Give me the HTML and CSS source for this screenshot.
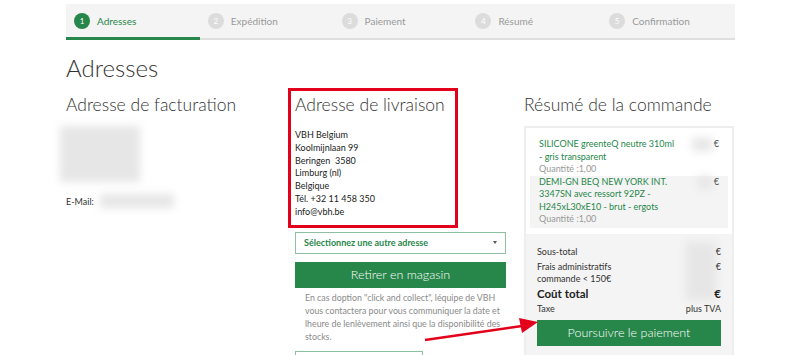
FILE: index.html
```html
<!DOCTYPE html>
<html lang="fr">
<head>
  <meta charset="UTF-8" />
  <meta name="viewport" content="width=device-width, initial-scale=1.0"/>
  <title>Adresses - VBH</title>
  <link rel="stylesheet" href="styles.css">
</head>
<body>

  <div class="page">
    <ul class="steps">
      <li class="step active"><span class="num">1</span>Adresses</li>
      <li class="step"><span class="num">2</span>Expédition</li>
      <li class="step"><span class="num">3</span>Paiement</li>
      <li class="step"><span class="num">4</span>Résumé</li>
      <li class="step"><span class="num">5</span>Confirmation</li>
    </ul>

    <h1>Adresses</h1>

    <div class="columns">
      <!-- billing -->
      <div class="col">
        <h3>Adresse de facturation</h3>
        <div class="blurred billing-blur"></div>
        <div class="email">E-Mail: <span class="blurred email-blur"></span></div>
      </div>

      <!-- delivery -->
      <div class="col delivery">
        <div class="marked">
          <h3>Adresse de livraison</h3>
          <div class="address">
            VBH Belgium<br>
            Koolmijnlaan 99<br>
            Beringen&nbsp; 3580<br>
            Limburg (nl)<br>
            Belgique<br>
            Tél. +32 11 458 350<br>
            info@vbh.be
          </div>
        </div>

        <div class="select">
          <span>Sélectionnez une autre adresse</span>
          <span class="caret"></span>
        </div>
        <button class="btn">Retirer en magasin</button>
        <p class="note">En cas doption "click and collect", léquipe de VBH vous contactera pour vous communiquer la date et lheure de lenlèvement ainsi que la disponibilité des stocks.</p>
        <div class="outline-btn"></div>
      </div>

      <!-- summary -->
      <div class="col">
        <h3>Résumé de la commande</h3>
        <div class="summary">
          <div class="items">
            <div class="item">
              <div class="item-info">
                <div class="item-name">SILICONE greenteQ neutre 310ml - gris transparent</div>
                <div class="qty">Quantité :1,00</div>
              </div>
              <div class="price"><span class="blurred price-blur"></span>€</div>
            </div>
            <div class="item alt">
              <div class="item-info">
                <div class="item-name">DEMI-GN BEQ NEW YORK INT. 3347SN avec ressort 92PZ - H245xL30xE10 - brut - ergots</div>
                <div class="qty">Quantité :1,00</div>
              </div>
              <div class="price"><span class="blurred price-blur small"></span>€</div>
            </div>
          </div>
          <div class="totals">
            <span class="blurred totals-blur"></span>
            <div class="line"><span>Sous-total</span><span>€</span></div>
            <div class="line"><span>Frais administratifs<br>commande &lt; 150€</span><span>€</span></div>
            <div class="line total"><span>Coût total</span><span>€</span></div>
            <div class="line"><span>Taxe</span><span>plus TVA</span></div>
            <button class="btn pay">Poursuivre le paiement</button>
          </div>
        </div>
      </div>
    </div>

    <svg class="arrow" width="800" height="355" viewBox="0 0 800 355">
      <line x1="425" y1="340" x2="522" y2="326" stroke="#e3001b" stroke-width="2.5"/>
      <polygon points="538,322 519,318 522,333" fill="#e3001b"/>
    </svg>
  </div>

</body>
</html>
```

FILE: styles.css
```css
:root {
  --green: #27874a;
  --green-line: #8cc0a0;
  --text: #333;
  --muted: #8a8a8a;
  --light: #f4f4f4;
}
body {
  font-family: Lato, 'Open Sans', sans-serif;
  margin: 0;
  padding: 0;
  color: var(--text);
  background: #fff;
}
.page {
  position: relative;
  width: 669px;
  margin-left: 66px;
  padding-top: 4px;
}
.steps {
  display: flex;
  list-style: none;
  margin: 0;
  padding: 0;
  background: var(--light);
}
.step {
  width: 134px;
  height: 36px;
  display: flex;
  align-items: center;
  gap: 7px;
  padding-left: 8px;
  box-sizing: border-box;
  font-size: 10px;
  color: #9a9a9a;
  border-bottom: 2px solid #dedede;
}
.step .num {
  width: 16px;
  height: 16px;
  border-radius: 50%;
  background: #dcdcdc;
  color: #fff;
  font-size: 8px;
  display: flex;
  align-items: center;
  justify-content: center;
}
.step.active {
  color: var(--green);
  border-bottom: 3px solid var(--green);
  padding-top: 1px;
}
.step.active .num {
  background: var(--green);
}
h1 {
  font-weight: 300;
  font-size: 24px;
  margin: 13px 0 12px;
  color: #333;
}
h3 {
  font-weight: 300;
  font-size: 17.5px;
  margin: 0 0 11px;
  color: #333;
}
.columns {
  display: grid;
  grid-template-columns: 211px 211px 210px;
  gap: 18px;
}
.blurred {
  display: inline-block;
  background: #e6e6e6;
  filter: blur(4px);
}
.billing-blur {
  display: block;
  width: 80px;
  height: 56px;
  margin: 4px 0 0 -6px;
}
.email {
  font-size: 9px;
  margin-top: 12px;
  display: flex;
  align-items: center;
  gap: 6px;
}
.email-blur {
  width: 74px;
  height: 14px;
}
.delivery {
  position: relative;
}
.marked {
  position: relative;
}
.marked h3 {
  margin-bottom: 14px;
}
.marked::before {
  content: "";
  position: absolute;
  left: -7px;
  top: -6px;
  width: 164px;
  height: 134px;
  border: 3px solid #e3001b;
}
.address {
  font-size: 9px;
  line-height: 12.8px;
  color: #222;
}
.select {
  margin-top: 13px;
  height: 20px;
  border: 1px solid var(--green-line);
  display: flex;
  align-items: center;
  justify-content: space-between;
  padding: 0 8px 0 8px;
  font-size: 9px;
  font-weight: 700;
  color: var(--green);
}
.caret {
  width: 0;
  height: 0;
  border-left: 2.5px solid transparent;
  border-right: 2.5px solid transparent;
  border-top: 3px solid #555;
}
.btn {
  display: block;
  width: 100%;
  height: 26px;
  margin-top: 8px;
  border: none;
  background: var(--green);
  color: #fff;
  font-family: inherit;
  font-size: 12.5px;
  font-weight: 300;
  cursor: pointer;
}
.note {
  margin: 3px 0 0;
  padding: 0 0 0 10px;
  font-size: 8.8px;
  line-height: 13px;
  color: var(--muted);
}
.outline-btn {
  margin-top: 8px;
  width: 126px;
  height: 24px;
  border: 1px solid var(--green-line);
}
.summary {
  border: 2px solid #eee;
  font-size: 9px;
}
.items {
  padding: 10px 4px 6px;
}
.item {
  display: flex;
  justify-content: space-between;
  padding: 0 9px;
  line-height: 12.5px;
}
.item.alt {
  background: var(--light);
  padding-bottom: 2px;
}
.item-info {
  width: 140px;
}
.item-name {
  color: var(--green);
}
.qty {
  color: #999;
}
.price {
  display: flex;
  gap: 2px;
  color: #333;
}
.price-blur {
  width: 20px;
  height: 13px;
}
.price-blur.small {
  width: 14px;
}
.totals {
  position: relative;
  background: var(--light);
  padding: 12px 11px 14px;
}
.totals-blur {
  position: absolute;
  right: 16px;
  top: 8px;
  width: 30px;
  height: 58px;
}
.line {
  position: relative;
  display: flex;
  justify-content: space-between;
  align-items: flex-start;
  line-height: 12px;
  margin-bottom: 3px;
}
.line.total {
  font-size: 11.5px;
  font-weight: 700;
  color: #222;
}
.btn.pay {
  margin-top: 5px;
}
.arrow {
  position: absolute;
  left: -66px;
  top: 0;
  pointer-events: none;
}
```
